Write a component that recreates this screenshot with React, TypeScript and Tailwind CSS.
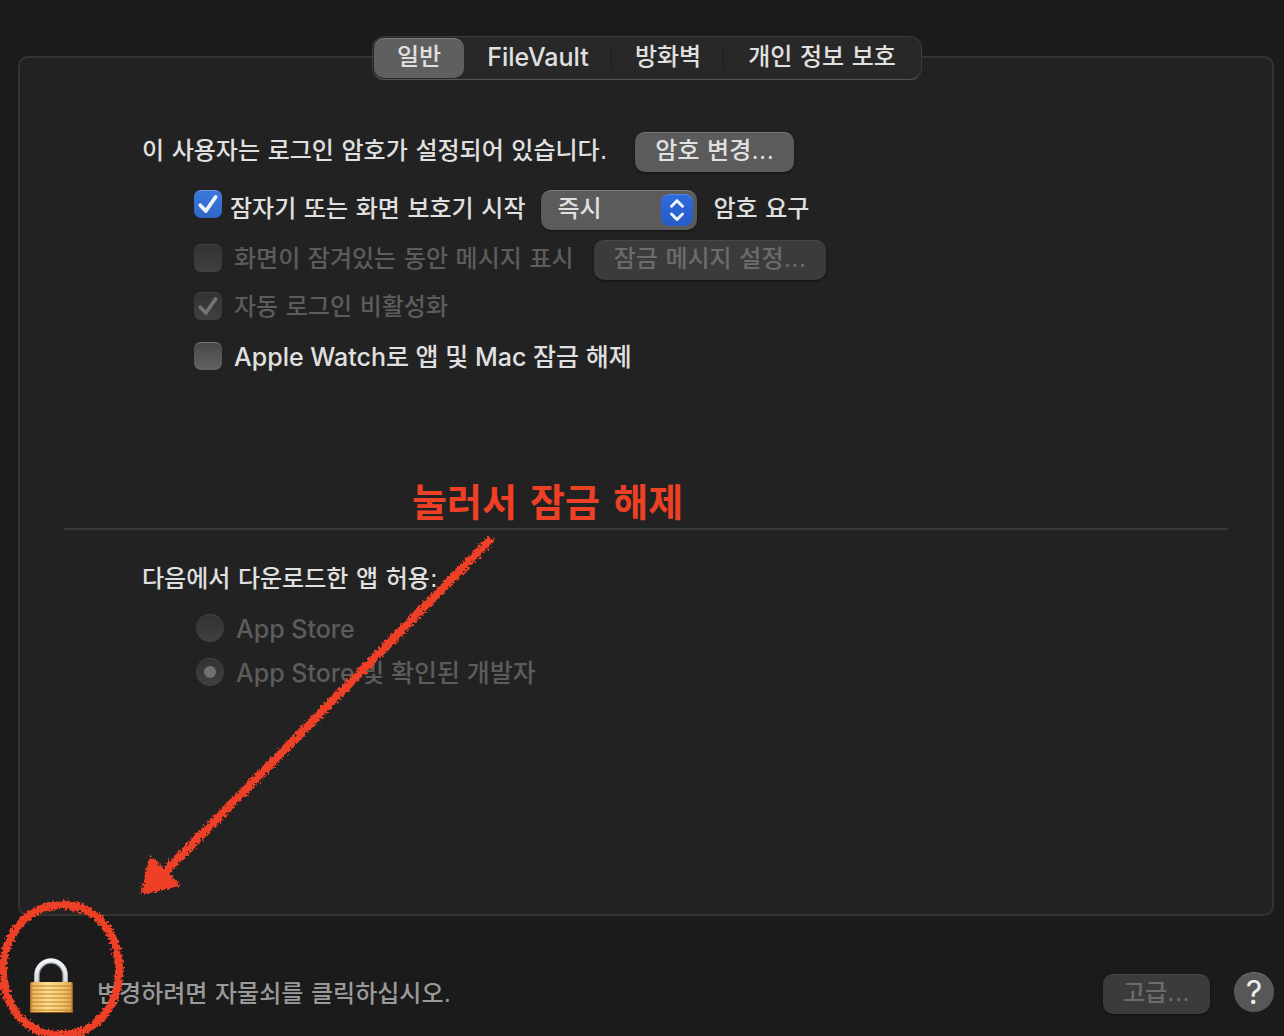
import type { ReactNode } from 'react';
import clsx from 'clsx';

const tabs = [
  { id: 'general', label: '일반', width: 'w-[90px]' },
  { id: 'filevault', label: 'FileVault', width: 'w-[148px]' },
  { id: 'firewall', label: '방화벽', width: 'w-[112px]' },
  { id: 'privacy', label: '개인 정보 보호', width: 'w-[196px]' },
];

function Tabs() {
  return (
    <div
      role="tablist"
      className="relative z-10 flex h-11 rounded-xl border border-[#3b3b3b] border-b-[#565656] bg-[#282828] p-px"
    >
      {tabs.map((tab, i) => (
        <button
          key={tab.id}
          type="button"
          role="tab"
          aria-selected={i === 0}
          className={clsx(
            'relative flex h-10 items-center justify-center rounded-[10px] border-t pb-1 leading-7',
            tab.width,
            tab.id === 'filevault' && "font-[Inter,'Noto_Sans_CJK_KR',sans-serif] text-[25px]",
            i === 0 ? 'border-[#7c7c7c] bg-[#5f5f5f]' : 'border-transparent'
          )}
        >
          {tab.label}
          {(i === 1 || i === 2) && (
            <span className="absolute right-0 top-2 h-6 w-px bg-[#1c1c1c]" />
          )}
        </button>
      ))}
    </div>
  );
}

interface OptionProps {
  id: string;
  children: ReactNode;
  checked?: boolean;
  disabled?: boolean;
  labelClass?: string;
}

function Checkbox({ id, children, checked, disabled, labelClass = 'pl-3 pt-px' }: OptionProps) {
  return (
    <div className="flex items-start">
      <span className="grid size-7 shrink-0">
        <input
          id={id}
          type="checkbox"
          defaultChecked={checked}
          disabled={disabled}
          className={clsx(
            'peer col-start-1 row-start-1 size-7 appearance-none rounded-[7px] border-t bg-linear-to-b',
            disabled
              ? 'border-[#454545] from-[#333333] to-[#404040]'
              : 'border-[#777777] from-[#484848] to-[#636363] checked:border-[#6a9bea] checked:from-[#3b78dc] checked:to-[#2f66c6]'
          )}
        />
        <svg
          viewBox="0 0 28 28"
          className={clsx(
            'pointer-events-none invisible col-start-1 row-start-1 size-7 peer-checked:visible',
            disabled ? 'text-[#737373]' : 'text-[#f0f4fc]'
          )}
          fill="none"
          stroke="currentColor"
          strokeWidth="3.8"
          strokeLinecap="round"
          strokeLinejoin="round"
        >
          <path d="M6.3 15.2 L11.8 21 L21.6 7" />
        </svg>
      </span>
      <label
        htmlFor={id}
        className={clsx('whitespace-nowrap leading-7', labelClass, disabled && 'text-[#5c5c5c]')}
      >
        {children}
      </label>
    </div>
  );
}

function Radio({ id, children, checked }: OptionProps) {
  return (
    <div className="flex h-7 items-start">
      <span className="grid size-7 shrink-0 place-items-center">
        <input
          id={id}
          type="radio"
          name="allow-apps"
          defaultChecked={checked}
          disabled
          className="peer col-start-1 row-start-1 size-7 appearance-none rounded-full border-t border-[#454545] bg-linear-to-b from-[#333333] to-[#404040]"
        />
        <span className="invisible col-start-1 row-start-1 size-3 rounded-full bg-[#707070] peer-checked:visible" />
      </span>
      <label
        htmlFor={id}
        className="whitespace-nowrap pl-3 pt-px font-[Inter,'Noto_Sans_CJK_KR',sans-serif] text-[25px] leading-7 text-[#5c5c5c]"
      >
        {children}
      </label>
    </div>
  );
}

function PushButton({ children, disabled }: { children: ReactNode; disabled?: boolean }) {
  return (
    <button
      type="button"
      disabled={disabled}
      className={clsx(
        'flex h-10 shrink-0 items-center justify-center whitespace-nowrap rounded-[10px] border-t px-5 pb-1 leading-7 shadow-sm shadow-black/40',
        disabled
          ? 'border-[#484848] bg-[#3b3b3b] text-[#6b6b6b]'
          : 'border-[#7a7a7a] bg-[#5b5b5b]'
      )}
    >
      {children}
    </button>
  );
}

function DelaySelect() {
  return (
    <div className="relative w-[156px]">
      <select
        aria-label="암호 요구"
        className="h-10 w-full appearance-none rounded-[10px] border-t border-[#7a7a7a] bg-[#5b5b5b] pb-1 pl-4 pr-10 leading-7 shadow-sm shadow-black/40"
      >
        <option>즉시</option>
      </select>
      <span className="pointer-events-none absolute right-1 top-1 size-8 rounded-lg border-t border-[#5584e4] bg-linear-to-b from-[#2f6ae0] to-[#285bc4]">
        <svg
          viewBox="0 0 32 32"
          className="-mt-px size-8"
          fill="none"
          stroke="#eef3fc"
          strokeWidth="3"
          strokeLinecap="round"
          strokeLinejoin="round"
        >
          <path d="M10.5 12.2 L16 6.7 L21.5 12.2 M10.5 20 L16 25.5 L21.5 20" />
        </svg>
      </span>
    </div>
  );
}

function Padlock() {
  return (
    <svg viewBox="0 0 44 56" className="h-14 w-11" aria-hidden="true">
      <defs>
        <linearGradient id="brass" x1="0" x2="1" y1="0" y2="0">
          <stop offset="0" stopColor="#a8651c" />
          <stop offset="0.08" stopColor="#e6ad52" />
          <stop offset="0.4" stopColor="#fbdc8c" />
          <stop offset="0.75" stopColor="#f2c067" />
          <stop offset="0.94" stopColor="#d8983f" />
          <stop offset="1" stopColor="#8b4f15" />
        </linearGradient>
        <linearGradient id="steel" x1="0" x2="0" y1="0" y2="1">
          <stop offset="0" stopColor="#f2f4f7" />
          <stop offset="0.5" stopColor="#e6eaee" />
          <stop offset="1" stopColor="#cfd6dc" />
        </linearGradient>
      </defs>
      <path d="M8 26 V17.500 a14 14.500 0 0 1 28 0 V26" fill="none" stroke="#8b959d" strokeWidth="5.500" />
      <path d="M7.500 26 V17 a14.500 14.500 0 0 1 29 0 V26" fill="none" stroke="url(#steel)" strokeWidth="4" />
      <rect x="1" y="24" width="43" height="31" rx="1.500" fill="url(#brass)" />
      <path
        d="M1.500 28 h42 M1.500 32 h42 M1.500 36 h42 M1.500 40 h42 M1.500 44 h42 M1.500 48 h42 M1.500 52 h42"
        stroke="#c4842f"
        strokeWidth="1.100"
      />
      <path
        d="M2 26 h41 M2 30 h41 M2 34 h41 M2 38 h41 M2 42 h41 M2 46 h41 M2 50 h41"
        stroke="#fff0b4"
        strokeOpacity="0.35"
        strokeWidth="1"
      />
      <path d="M1.500 54.500 h42" stroke="#8e5317" strokeWidth="1.200" />
    </svg>
  );
}

// Red crayon marks that point at the padlock
function Annotation() {
  return (
    <div className="pointer-events-none absolute inset-0 overflow-hidden">
      <p className="absolute left-[412px] top-[475px] whitespace-nowrap text-[38px] font-bold leading-[56px] text-[#ee4025]">
        눌러서 잠금 해제
      </p>
      <svg
        width="1284"
        height="1036"
        viewBox="0 0 1284 1036"
        className="absolute left-0 top-0 max-w-none"
        aria-hidden="true"
      >
        <filter id="crayon" filterUnits="userSpaceOnUse" x="-20" y="500" width="560" height="560">
          <feTurbulence type="fractalNoise" baseFrequency="0.4" numOctaves="2" seed="4" result="noise" />
          <feDisplacementMap in="SourceGraphic" in2="noise" scale="8" xChannelSelector="R" yChannelSelector="G" />
        </filter>
        <g filter="url(#crayon)" stroke="#ee4025" fill="none" strokeLinecap="round">
          <path d="M489 541 L162 875" strokeWidth="8.500" />
          <path d="M151 860 L177 884 L144 892 Z" fill="#ee4025" strokeWidth="5" strokeLinejoin="round" />
          <path
            d="M119 967 C117 928 93 905 62 905 C28 905 3 935 3 971 C3 1008 28 1035 61 1035 C95 1035 118 1007 119 973"
            strokeWidth="8"
          />
        </g>
      </svg>
    </div>
  );
}

export default function App() {
  return (
    <main className="relative flex min-h-screen flex-col bg-[#1b1b1b] pt-9 font-['DejaVu_Sans','Noto_Sans_CJK_KR',sans-serif] text-[24px] font-medium text-[#e0e0e0]">
      <div className="flex justify-center pl-[10px]">
        <Tabs />
      </div>

      <section className="-mt-6 ml-[18px] mr-[10px] flex-1 rounded-[10px] border-2 border-[#343434] bg-[#222222] pt-[74px]">
        <div className="pl-[122px]">
          <div className="flex h-10 items-center gap-7">
            <p className="whitespace-nowrap pb-[2px] leading-7">이 사용자는 로그인 암호가 설정되어 있습니다.</p>
            <PushButton>암호 변경...</PushButton>
          </div>

          <div className="pl-[52px]">
            <div className="mt-[18px] flex h-10 items-start gap-4">
              <Checkbox id="require-password" checked labelClass="pl-2 pt-[5px]">
                잠자기 또는 화면 보호기 시작
              </Checkbox>
              <DelaySelect />
              <span className="whitespace-nowrap pt-[5px] leading-7">암호 요구</span>
            </div>
            <div className="mt-[10px] flex h-10 items-start gap-5">
              <div className="pt-1">
                <Checkbox id="lock-message" disabled>
                  화면이 잠겨있는 동안 메시지 표시
                </Checkbox>
              </div>
              <PushButton disabled>잠금 메시지 설정...</PushButton>
            </div>
            <div className="mt-3 h-7">
              <Checkbox id="auto-login" checked disabled>
                자동 로그인 비활성화
              </Checkbox>
            </div>
            <div className="mt-[22px] h-7 font-[Inter,'Noto_Sans_CJK_KR',sans-serif] text-[25px]">
              <Checkbox id="apple-watch">Apple Watch로 앱 및 Mac 잠금 해제</Checkbox>
            </div>
          </div>
        </div>

        <hr className="mx-11 mt-[158px] border-t-2 border-[#383838]" />

        <fieldset className="mt-[35px] pl-[122px]">
          <legend className="leading-7">다음에서 다운로드한 앱 허용:</legend>
          <div className="mt-[21px] flex flex-col gap-4 pl-[54px]">
            <Radio id="app-store">App Store</Radio>
            <Radio id="app-store-dev" checked>
              App Store 및 확인된 개발자
            </Radio>
          </div>
        </fieldset>
      </section>

      <footer className="flex h-[120px] items-center pl-[29px] pr-[10px] pt-8">
        <button type="button" aria-label="잠금 해제" className="-mt-3">
          <Padlock />
        </button>
        <p className="flex-1 pl-6 pt-1 leading-7 text-[#9a9a9a]">변경하려면 자물쇠를 클릭하십시오.</p>
        <div className="pt-1">
          <PushButton disabled>고급...</PushButton>
        </div>
        <button
          type="button"
          aria-label="도움말"
          className="ml-6 flex size-10 items-center justify-center rounded-full border-t border-[#757575] bg-[#575757] font-[Inter,sans-serif] text-[32px] font-normal leading-none text-[#ededed]"
        >
          ?
        </button>
      </footer>

      <Annotation />
    </main>
  );
}
